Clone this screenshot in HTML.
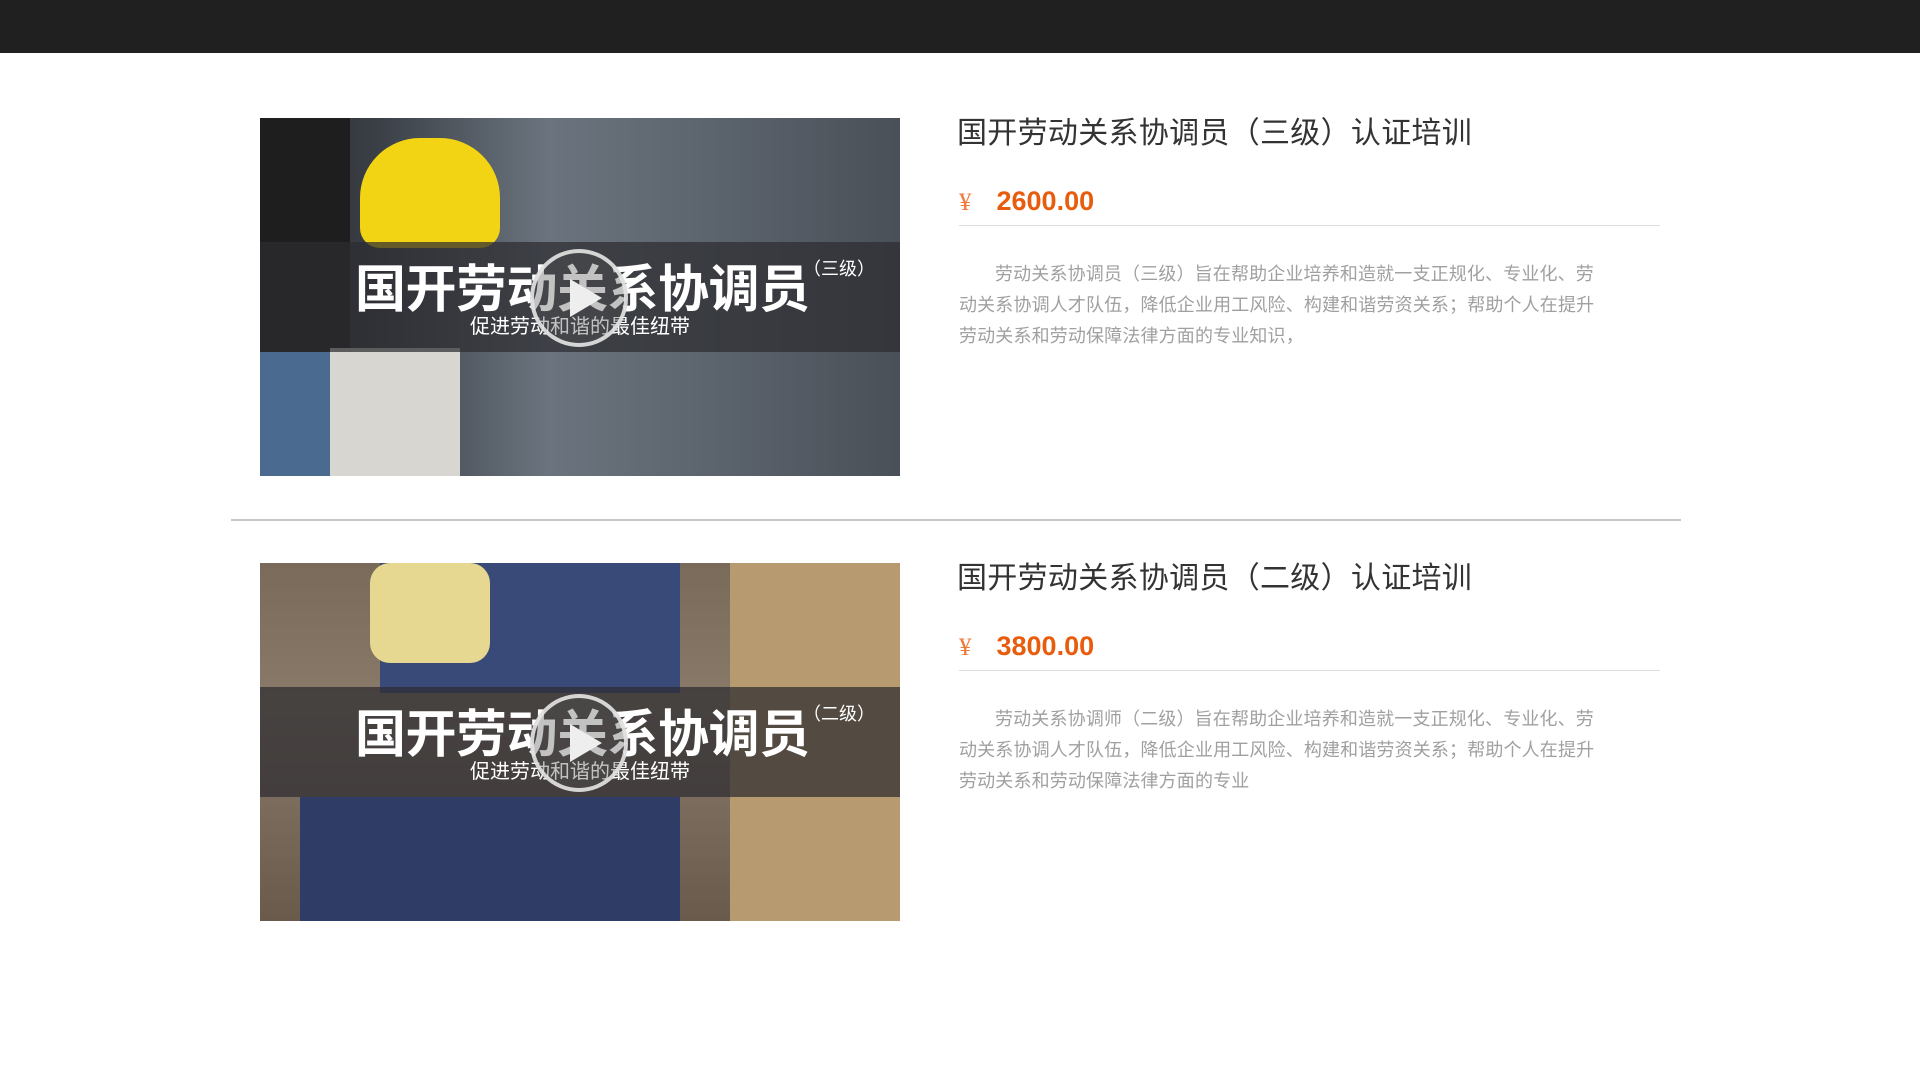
<!DOCTYPE html>
<html><head><meta charset="utf-8"><style>
*{margin:0;padding:0;box-sizing:border-box}
body{width:1920px;height:1080px;background:#fff;position:relative;overflow:hidden;font-family:"Liberation Sans","Noto Sans CJK SC",sans-serif}
.top{position:absolute;left:0;top:0;width:1920px;height:53px;background:#202020}
.img{position:absolute;left:260px;width:640px;height:358px;overflow:hidden}
.i1{top:118px;background:linear-gradient(90deg,#2a2a2c 0%,#3a3f46 18%,#6b747e 45%,#5c646d 70%,#4a5058 100%)}
.i2{top:563px;background:linear-gradient(180deg,#7a6a5a 0%,#8a7a6a 40%,#6a5a4c 100%)}
.band{position:absolute;left:0;top:124px;width:640px;height:110px;background:rgba(45,45,48,.72)}
.big{position:absolute;left:95px;top:130px;font-size:51px;font-weight:bold;color:#fff;letter-spacing:-0.5px;white-space:nowrap}
.lvl{position:absolute;left:543px;top:137px;font-size:18px;color:#fff;white-space:nowrap}
.sub{position:absolute;left:210px;top:192px;font-size:20px;color:#fff;white-space:nowrap}
.play{position:absolute;left:270px;top:131px;width:98px;height:98px;border-radius:50%;border:4px solid rgba(230,230,230,.9);background:rgba(80,80,80,.35)}
.play:after{content:"";position:absolute;left:36px;top:26px;border-left:32px solid #eee;border-top:19px solid transparent;border-bottom:19px solid transparent}
.title{position:absolute;left:957px;font-size:30px;color:#333;white-space:nowrap;letter-spacing:0.3px}
.price{position:absolute;left:959px;color:#e85c0d;white-space:nowrap}
.price .y{font-family:"Liberation Serif","Noto Serif CJK SC",serif;font-size:25px;color:#f07a3a;margin-right:25px}
.price b{font-size:27px}
.hr{position:absolute;left:959px;width:701px;height:1px;background:#dcdcdc}
.desc{position:absolute;left:959px;width:645px;font-size:18px;line-height:31px;color:#a0a0a0;text-indent:2em;letter-spacing:0.15px}
.div{position:absolute;left:231px;top:519px;width:1450px;height:2px;background:#c8c8c8}
</style></head><body>
<div class="top"></div>

<div class="img i1">
<div style="position:absolute;left:0;top:0;width:90px;height:358px;background:#1e1e1e"></div>
<div style="position:absolute;left:100px;top:20px;width:140px;height:110px;border-radius:60px 60px 20px 20px;background:#f2d414"></div>
<div style="position:absolute;left:70px;top:230px;width:130px;height:128px;background:#d8d6d0"></div>
<div style="position:absolute;left:0;top:234px;width:70px;height:124px;background:#4a6a90"></div>
<div class="band"></div>
<div class="big">国开劳动关系协调员</div>
<div class="lvl">（三级）</div>
<div class="sub">促进劳动和谐的最佳纽带</div>
<div class="play"></div>
</div>

<div class="title" style="top:108px">国开劳动关系协调员（三级）认证培训</div>
<div class="price" style="top:186px"><span class="y">¥</span><b>2600.00</b></div>
<div class="hr" style="top:225px"></div>
<div class="desc" style="top:259px">劳动关系协调员（三级）旨在帮助企业培养和造就一支正规化、专业化、劳动关系协调人才队伍，降低企业用工风险、构建和谐劳资关系；帮助个人在提升劳动关系和劳动保障法律方面的专业知识，</div>

<div class="div"></div>

<div class="img i2">
<div style="position:absolute;left:120px;top:0;width:300px;height:130px;background:#3a4a78"></div>
<div style="position:absolute;left:110px;top:0;width:120px;height:100px;background:#e6d890;border-radius:20px"></div>
<div style="position:absolute;left:40px;top:234px;width:380px;height:124px;background:#2e3c66"></div>
<div style="position:absolute;left:470px;top:0;width:170px;height:358px;background:#b89a70"></div>
<div class="band"></div>
<div class="big">国开劳动关系协调员</div>
<div class="lvl">（二级）</div>
<div class="sub">促进劳动和谐的最佳纽带</div>
<div class="play"></div>
</div>

<div class="title" style="top:553px">国开劳动关系协调员（二级）认证培训</div>
<div class="price" style="top:631px"><span class="y">¥</span><b>3800.00</b></div>
<div class="hr" style="top:670px"></div>
<div class="desc" style="top:704px">劳动关系协调师（二级）旨在帮助企业培养和造就一支正规化、专业化、劳动关系协调人才队伍，降低企业用工风险、构建和谐劳资关系；帮助个人在提升劳动关系和劳动保障法律方面的专业</div>
</body></html>
